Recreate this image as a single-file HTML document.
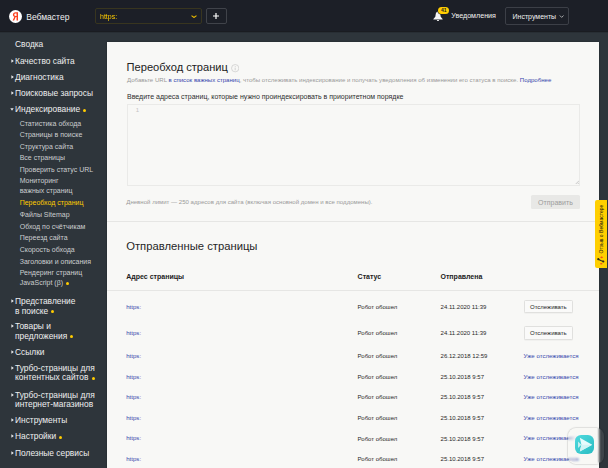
<!DOCTYPE html>
<html><head><meta charset="utf-8"><style>
*{margin:0;padding:0;box-sizing:border-box}
html,body{width:608px;height:468px;overflow:hidden;background:#2e353b;font-family:"Liberation Sans",sans-serif}
.t{position:absolute;white-space:nowrap}
.hdr{position:absolute;left:0;top:0;width:608px;height:32px;background:#1c1f27;border-bottom:1px solid #1a1c21;box-shadow:0 0.5px 0 rgba(26,28,33,.5)}
.logo{position:absolute;left:9.1px;top:9.8px;width:13px;height:13px}
.logo svg{display:block}
.sel{position:absolute;left:95.4px;top:8.4px;width:106.3px;height:15.3px;border:1px solid #38351f;border-radius:2px}
.chev{position:absolute}
.plus{position:absolute;left:206.2px;top:8.4px;width:20.4px;height:15.3px;border:1px solid #40434a;border-radius:2px}
.badge{position:absolute;left:438.2px;top:7px;width:11.3px;height:7.2px;border-radius:3.6px;background:#ffcc00;color:#222;font-size:5px;font-weight:700;line-height:7.2px;text-align:center;box-shadow:0 0 0 0.6px #1c1f27}
.tools{position:absolute;left:505.3px;top:7.4px;width:64.2px;height:17.2px;border:1px solid #3c3f47;border-radius:2px}
.ic{position:absolute}
.ar{position:absolute;width:0;height:0;border-top:1.5px solid transparent;border-bottom:1.5px solid transparent;border-left:2.3px solid #e9eaeb}
.ad{position:absolute;width:0;height:0;border-left:1.5px solid transparent;border-right:1.5px solid transparent;border-top:2.3px solid #e9eaeb}
.dot{display:inline-block;width:3px;height:3px;border-radius:50%;background:#ffcc00;margin-left:3.1px;vertical-align:0.5px}
.panel{position:absolute;left:106.8px;top:41.6px;width:492.1px;height:430px;background:#f8f8f6;box-shadow:0 0 1.5px rgba(0,0,0,.35)}
.lnk{color:#3646ac}
.ta{position:absolute;left:127px;top:104px;width:453px;height:82px;border:1px solid #eaeae8;background:#f8f8f6}
.btn-send{position:absolute;left:531.2px;top:195px;width:48.7px;height:13.8px;background:#e8e8e6;border-radius:1.5px}
.hr{position:absolute;left:106.8px;width:492.1px;height:0.6px;background:#e6e6e4}
.btn-tr{position:absolute;left:524px;width:48.7px;height:13.6px;border:0.6px solid #e0e0de;border-radius:1.5px;background:#fafaf9;box-shadow:0 0.4px 0.6px rgba(0,0,0,.06)}
.fb{position:absolute;left:595px;top:199.7px;width:12px;height:68.3px;background:#ffcf00;border-radius:2px 0 0 2px}
.fbt{position:absolute;left:6.2px;top:29.1px;font-size:5.05px;line-height:5px;color:#111;white-space:nowrap;transform:translate(-50%,-50%) rotate(-90deg)}
.flo{position:absolute;left:567.5px;top:428.3px;width:36.5px;height:35.4px;border-radius:8px;background:rgba(250,250,248,.08);backdrop-filter:blur(1.2px);-webkit-backdrop-filter:blur(1.2px);box-shadow:0 0 0 1px rgba(0,0,0,.045), 0 0 2px rgba(0,0,0,.2)}
.floi{position:absolute;left:575.3px;top:435px;width:19px;height:19px;border-radius:6px;background:linear-gradient(135deg,#50dade,#29bcc2);box-shadow:0 0 3px 3px rgba(247,247,245,.85)}
</style></head><body>
<div class="hdr"></div>
<div class="logo"><svg width="13" height="13" viewBox="0 0 26 26"><circle cx="13" cy="13" r="13" fill="#fff"/><path fill-rule="evenodd" d="M18 4.6H13.3C10 4.6 7.8 6.5 7.8 9.3C7.8 11.4 8.9 12.6 10.7 13.4L7.3 20.8H10.3L13.4 14H15.1V20.8H18ZM15.1 6.9H13.6C11.7 6.9 10.6 7.8 10.6 9.4C10.6 11 11.7 11.8 13.6 11.8H15.1Z" fill="#fc3f1d"/></svg></div><div class="t" style="left:26.3px;top:12.50px;font-size:8.5px;line-height:8.5px;color:#f0f0f0;font-weight:400;">Вебмастер</div>
<div class="sel"></div><div class="t" style="left:99.9px;top:12.87px;font-size:7px;line-height:7px;color:#ffcc00;font-weight:400;will-change:transform;">https:</div>
<svg class="chev" style="left:190.5px;top:14.5px" width="6" height="3.2" viewBox="0 0 6 3.2"><path d="M0.5 0.6L3 2.5L5.5 0.6" fill="none" stroke="#e8b800" stroke-width="1.1"/></svg><div class="plus"><svg width="8" height="8" viewBox="0 0 8 8" style="position:absolute;left:5.2px;top:2.9px"><path d="M4 1v6M1 4h6" stroke="#fff" stroke-width="1.2"/></svg></div><svg style="position:absolute;left:433.3px;top:11px" width="10" height="10" viewBox="0 0 10 10"><path d="M5 0.5C3.8 0.5 3 1.5 2.8 2.8L2.3 5.8L0.4 7.9V8.5H9.6V7.9L7.7 5.8L7.2 2.8C7 1.5 6.2 0.5 5 0.5Z M3.9 8.9H6.1C6.1 9.5 5.6 9.9 5 9.9C4.4 9.9 3.9 9.5 3.9 8.9Z" fill="#f4f4f4"/></svg><div class="badge">41</div><div class="t" style="left:451.3px;top:12.75px;font-size:7.15px;line-height:7.15px;color:#f0f0f0;font-weight:400;">Уведомления</div>
<div class="tools"></div><div class="t" style="left:512.5px;top:12.67px;font-size:7px;line-height:7px;color:#f0f0f0;font-weight:400;">Инструменты</div>
<svg class="chev" style="left:558.6px;top:15px" width="5.4" height="3.2" viewBox="0 0 6 4"><path d="M0.6 0.6L3 3L5.4 0.6" fill="none" stroke="#ddd" stroke-width="0.9"/></svg>
<div class="t" style="left:15px;top:40.49px;font-size:8.4px;line-height:8.4px;color:#eeeff0;font-weight:400;">Сводка</div>
<div class="t" style="left:15px;top:56.79px;font-size:8.4px;line-height:8.4px;color:#eeeff0;font-weight:400;">Качество сайта</div>
<svg class="ic" style="left:10.5px;top:58.60px" width="3" height="4" viewBox="0 0 3 4"><path d="M0.4 0.2L2.8 2L0.4 3.8z" fill="#e9eaeb"/></svg><div class="t" style="left:15px;top:72.99px;font-size:8.4px;line-height:8.4px;color:#eeeff0;font-weight:400;">Диагностика</div>
<svg class="ic" style="left:10.5px;top:74.80px" width="3" height="4" viewBox="0 0 3 4"><path d="M0.4 0.2L2.8 2L0.4 3.8z" fill="#e9eaeb"/></svg><div class="t" style="left:15px;top:89.09px;font-size:8.4px;line-height:8.4px;color:#eeeff0;font-weight:400;">Поисковые запросы</div>
<svg class="ic" style="left:10.5px;top:90.90px" width="3" height="4" viewBox="0 0 3 4"><path d="M0.4 0.2L2.8 2L0.4 3.8z" fill="#e9eaeb"/></svg><div class="t" style="left:15px;top:105.29px;font-size:8.4px;line-height:8.4px;color:#eeeff0;font-weight:400;">Индексирование<span class="dot"></span></div>
<svg class="ic" style="left:9.8px;top:108.40px" width="4" height="3" viewBox="0 0 4 3"><path d="M0.3 0.2L3.7 0.2L2 2.8z" fill="#e9eaeb"/></svg><div class="t" style="left:15px;top:297.19px;font-size:8.4px;line-height:8.4px;color:#eeeff0;font-weight:400;">Представление</div>
<div class="t" style="left:15px;top:306.79px;font-size:8.4px;line-height:8.4px;color:#eeeff0;font-weight:400;">в поиске<span class="dot"></span></div>
<svg class="ic" style="left:10.5px;top:299.00px" width="3" height="4" viewBox="0 0 3 4"><path d="M0.4 0.2L2.8 2L0.4 3.8z" fill="#e9eaeb"/></svg><div class="t" style="left:15px;top:322.19px;font-size:8.4px;line-height:8.4px;color:#eeeff0;font-weight:400;">Товары и</div>
<div class="t" style="left:15px;top:331.79px;font-size:8.4px;line-height:8.4px;color:#eeeff0;font-weight:400;">предложения<span class="dot"></span></div>
<svg class="ic" style="left:10.5px;top:324.00px" width="3" height="4" viewBox="0 0 3 4"><path d="M0.4 0.2L2.8 2L0.4 3.8z" fill="#e9eaeb"/></svg><div class="t" style="left:15px;top:348.29px;font-size:8.4px;line-height:8.4px;color:#eeeff0;font-weight:400;">Ссылки</div>
<svg class="ic" style="left:10.5px;top:350.10px" width="3" height="4" viewBox="0 0 3 4"><path d="M0.4 0.2L2.8 2L0.4 3.8z" fill="#e9eaeb"/></svg><div class="t" style="left:15px;top:363.89px;font-size:8.4px;line-height:8.4px;color:#eeeff0;font-weight:400;">Турбо-страницы для</div>
<div class="t" style="left:15px;top:373.49px;font-size:8.4px;line-height:8.4px;color:#eeeff0;font-weight:400;">контентных сайтов<span class="dot"></span></div>
<svg class="ic" style="left:10.5px;top:365.70px" width="3" height="4" viewBox="0 0 3 4"><path d="M0.4 0.2L2.8 2L0.4 3.8z" fill="#e9eaeb"/></svg><div class="t" style="left:15px;top:390.79px;font-size:8.4px;line-height:8.4px;color:#eeeff0;font-weight:400;">Турбо-страницы для</div>
<div class="t" style="left:15px;top:400.39px;font-size:8.4px;line-height:8.4px;color:#eeeff0;font-weight:400;">интернет-магазинов</div>
<svg class="ic" style="left:10.5px;top:392.60px" width="3" height="4" viewBox="0 0 3 4"><path d="M0.4 0.2L2.8 2L0.4 3.8z" fill="#e9eaeb"/></svg><div class="t" style="left:15px;top:415.79px;font-size:8.4px;line-height:8.4px;color:#eeeff0;font-weight:400;">Инструменты</div>
<svg class="ic" style="left:10.5px;top:417.60px" width="3" height="4" viewBox="0 0 3 4"><path d="M0.4 0.2L2.8 2L0.4 3.8z" fill="#e9eaeb"/></svg><div class="t" style="left:15px;top:432.39px;font-size:8.4px;line-height:8.4px;color:#eeeff0;font-weight:400;">Настройки<span class="dot"></span></div>
<svg class="ic" style="left:10.5px;top:434.20px" width="3" height="4" viewBox="0 0 3 4"><path d="M0.4 0.2L2.8 2L0.4 3.8z" fill="#e9eaeb"/></svg><div class="t" style="left:15px;top:448.69px;font-size:8.4px;line-height:8.4px;color:#eeeff0;font-weight:400;">Полезные сервисы</div>
<svg class="ic" style="left:10.5px;top:450.50px" width="3" height="4" viewBox="0 0 3 4"><path d="M0.4 0.2L2.8 2L0.4 3.8z" fill="#e9eaeb"/></svg><div class="t" style="left:19.7px;top:119.57px;font-size:7px;line-height:7px;color:#cbcdcf;font-weight:400;">Статистика обхода</div>
<div class="t" style="left:19.7px;top:131.07px;font-size:7px;line-height:7px;color:#cbcdcf;font-weight:400;">Страницы в поиске</div>
<div class="t" style="left:19.7px;top:142.77px;font-size:7px;line-height:7px;color:#cbcdcf;font-weight:400;">Структура сайта</div>
<div class="t" style="left:19.7px;top:154.27px;font-size:7px;line-height:7px;color:#cbcdcf;font-weight:400;">Все страницы</div>
<div class="t" style="left:19.7px;top:165.87px;font-size:7px;line-height:7px;color:#cbcdcf;font-weight:400;">Проверить статус URL</div>
<div class="t" style="left:19.7px;top:177.27px;font-size:7px;line-height:7px;color:#cbcdcf;font-weight:400;">Мониторинг</div>
<div class="t" style="left:19.7px;top:187.07px;font-size:7px;line-height:7px;color:#cbcdcf;font-weight:400;">важных страниц</div>
<div class="t" style="left:19.7px;top:199.07px;font-size:7px;line-height:7px;color:#ffcc00;font-weight:400;">Переобход страниц</div>
<div class="t" style="left:19.7px;top:210.87px;font-size:7px;line-height:7px;color:#cbcdcf;font-weight:400;">Файлы Sitemap</div>
<div class="t" style="left:19.7px;top:222.57px;font-size:7px;line-height:7px;color:#cbcdcf;font-weight:400;">Обход по счётчикам</div>
<div class="t" style="left:19.7px;top:234.27px;font-size:7px;line-height:7px;color:#cbcdcf;font-weight:400;">Переезд сайта</div>
<div class="t" style="left:19.7px;top:245.97px;font-size:7px;line-height:7px;color:#cbcdcf;font-weight:400;">Скорость обхода</div>
<div class="t" style="left:19.7px;top:257.67px;font-size:7px;line-height:7px;color:#cbcdcf;font-weight:400;">Заголовки и описания</div>
<div class="t" style="left:19.7px;top:269.37px;font-size:7px;line-height:7px;color:#cbcdcf;font-weight:400;">Рендеринг страниц</div>
<div class="t" style="left:19.7px;top:279.07px;font-size:7px;line-height:7px;color:#cbcdcf;font-weight:400;">JavaScript (β)<span class="dot" style="margin-left:3px"></span></div>

<div class="panel"></div>
<div class="t" style="left:126.6px;top:62.29px;font-size:11.12px;line-height:11.12px;color:#222;font-weight:400;">Переобход страниц</div>
<svg style="position:absolute;left:230.6px;top:64.2px" width="8.4" height="8.4" viewBox="0 0 16 16"><circle cx="8" cy="8" r="7" fill="none" stroke="#c4c4c4" stroke-width="1.2"/><path d="M8 7v5" stroke="#c4c4c4" stroke-width="1.4"/><circle cx="8" cy="4.6" r="0.9" fill="#c4c4c4"/></svg><div class="t" style="left:127px;top:76.86px;font-size:6.07px;line-height:6.07px;color:#999;font-weight:400;">Добавьте URL <span class="lnk">в список важных страниц</span>, чтобы отслеживать индексирование и получать уведомления об изменении его статуса в поиске. <span class="lnk">Подробнее</span></div>
<div class="t" style="left:127px;top:92.87px;font-size:7px;line-height:7px;color:#2e2e2e;font-weight:400;">Введите адреса страниц, которые нужно проиндексировать в приоритетном порядке</div>
<div class="ta"></div><div class="t" style="left:135.7px;top:106.72px;font-size:6px;line-height:6px;color:#c4c4c4;font-weight:400;">1</div>
<svg style="position:absolute;left:574.5px;top:179.5px" width="4.5" height="4.5" viewBox="0 0 9 9"><path d="M8.5 1L1 8.5M8.5 5L5 8.5" stroke="#999" stroke-width="1"/></svg><div class="t" style="left:126.3px;top:199.46px;font-size:6.07px;line-height:6.07px;color:#9a9a9a;font-weight:400;">Дневной лимит — 250 адресов для сайта (включая основной домен и все поддомены).</div>
<div class="btn-send"></div><div class="t" style="left:538.1px;top:198.57px;font-size:7px;line-height:7px;color:#9c9c9c;font-weight:400;">Отправить</div>
<div class="hr" style="top:221px"></div><div class="t" style="left:126.2px;top:241.48px;font-size:11.25px;line-height:11.25px;color:#262626;font-weight:400;">Отправленные страницы</div>
<div class="t" style="left:126.3px;top:273.07px;font-size:7px;line-height:7px;color:#222;font-weight:700;">Адрес страницы</div>
<div class="t" style="left:357.6px;top:273.07px;font-size:7px;line-height:7px;color:#222;font-weight:700;">Статус</div>
<div class="t" style="left:440.5px;top:273.07px;font-size:7px;line-height:7px;color:#222;font-weight:700;">Отправлена</div>
<div class="hr" style="top:290px"></div><div class="t" style="left:126.2px;top:303.64px;font-size:6.1px;line-height:6.1px;color:#3646ac;font-weight:400;">https:</div>
<div class="t" style="left:357.6px;top:303.72px;font-size:6px;line-height:6px;color:#282828;font-weight:400;">Робот обошел</div>
<div class="t" style="left:440.6px;top:303.72px;font-size:6px;line-height:6px;color:#282828;font-weight:400;">24.11.2020 11:39</div>
<div class="btn-tr" style="top:299.9px"></div><div class="t" style="left:530px;top:303.72px;font-size:6px;line-height:6px;color:#262626;font-weight:400;">Отслеживать</div>
<div class="t" style="left:126.2px;top:329.84px;font-size:6.1px;line-height:6.1px;color:#3646ac;font-weight:400;">https:</div>
<div class="t" style="left:357.6px;top:329.92px;font-size:6px;line-height:6px;color:#282828;font-weight:400;">Робот обошел</div>
<div class="t" style="left:440.6px;top:329.92px;font-size:6px;line-height:6px;color:#282828;font-weight:400;">24.11.2020 11:39</div>
<div class="btn-tr" style="top:326.0px"></div><div class="t" style="left:530px;top:329.92px;font-size:6px;line-height:6px;color:#262626;font-weight:400;">Отслеживать</div>
<div class="t" style="left:126.2px;top:353.24px;font-size:6.1px;line-height:6.1px;color:#3646ac;font-weight:400;">https:</div>
<div class="t" style="left:357.6px;top:353.32px;font-size:6px;line-height:6px;color:#282828;font-weight:400;">Робот обошел</div>
<div class="t" style="left:440.6px;top:353.32px;font-size:6px;line-height:6px;color:#282828;font-weight:400;">26.12.2018 12:59</div>
<div class="t" style="left:523.6px;top:353.24px;font-size:6.1px;line-height:6.1px;color:#3646ac;font-weight:400;">Уже отслеживается</div>
<div class="t" style="left:126.2px;top:373.64px;font-size:6.1px;line-height:6.1px;color:#3646ac;font-weight:400;">https:</div>
<div class="t" style="left:357.6px;top:373.72px;font-size:6px;line-height:6px;color:#282828;font-weight:400;">Робот обошел</div>
<div class="t" style="left:440.6px;top:373.72px;font-size:6px;line-height:6px;color:#282828;font-weight:400;">25.10.2018 9:57</div>
<div class="t" style="left:523.6px;top:373.64px;font-size:6.1px;line-height:6.1px;color:#3646ac;font-weight:400;">Уже отслеживается</div>
<div class="t" style="left:126.2px;top:394.04px;font-size:6.1px;line-height:6.1px;color:#3646ac;font-weight:400;">https:</div>
<div class="t" style="left:357.6px;top:394.12px;font-size:6px;line-height:6px;color:#282828;font-weight:400;">Робот обошел</div>
<div class="t" style="left:440.6px;top:394.12px;font-size:6px;line-height:6px;color:#282828;font-weight:400;">25.10.2018 9:57</div>
<div class="t" style="left:523.6px;top:394.04px;font-size:6.1px;line-height:6.1px;color:#3646ac;font-weight:400;">Уже отслеживается</div>
<div class="t" style="left:126.2px;top:414.74px;font-size:6.1px;line-height:6.1px;color:#3646ac;font-weight:400;">https:</div>
<div class="t" style="left:357.6px;top:414.82px;font-size:6px;line-height:6px;color:#282828;font-weight:400;">Робот обошел</div>
<div class="t" style="left:440.6px;top:414.82px;font-size:6px;line-height:6px;color:#282828;font-weight:400;">25.10.2018 9:57</div>
<div class="t" style="left:523.6px;top:414.74px;font-size:6.1px;line-height:6.1px;color:#3646ac;font-weight:400;">Уже отслеживается</div>
<div class="t" style="left:126.2px;top:435.44px;font-size:6.1px;line-height:6.1px;color:#3646ac;font-weight:400;">https:</div>
<div class="t" style="left:357.6px;top:435.52px;font-size:6px;line-height:6px;color:#282828;font-weight:400;">Робот обошел</div>
<div class="t" style="left:440.6px;top:435.52px;font-size:6px;line-height:6px;color:#282828;font-weight:400;">25.10.2018 9:57</div>
<div class="t" style="left:523.6px;top:435.44px;font-size:6.1px;line-height:6.1px;color:#3646ac;font-weight:400;">Уже отслеживается</div>
<div class="t" style="left:126.2px;top:456.24px;font-size:6.1px;line-height:6.1px;color:#3646ac;font-weight:400;">https:</div>
<div class="t" style="left:357.6px;top:456.32px;font-size:6px;line-height:6px;color:#282828;font-weight:400;">Робот обошел</div>
<div class="t" style="left:440.6px;top:456.32px;font-size:6px;line-height:6px;color:#282828;font-weight:400;">25.10.2018 9:57</div>
<div class="t" style="left:523.6px;top:456.24px;font-size:6.1px;line-height:6.1px;color:#3646ac;font-weight:400;">Уже отслеживается</div>

<div class="fb"><div class="fbt">Отзыв о Вебмастере</div><svg style="position:absolute;left:2px;top:56px" width="8" height="9" viewBox="0 0 8 9"><path d="M1.2 3.3L3.8 4.4L6.4 5.4" fill="none" stroke="#2a2a1a" stroke-width="1.1"/><circle cx="1.3" cy="3.2" r="1.1" fill="#2a2a1a"/><circle cx="6.3" cy="5.5" r="1.1" fill="#2a2a1a"/><ellipse cx="4.6" cy="1.4" rx="1.2" ry="0.8" fill="#ef4a1c"/><ellipse cx="4.3" cy="7.7" rx="1.2" ry="0.8" fill="#ef4a1c"/></svg></div>
<div class="flo"></div><div class="floi"><svg width="19" height="19" viewBox="0 0 19 19" style="position:absolute;left:0;top:0"><path d="M4.8 2.8L17.2 9.8L4.8 16.6L6.4 9.8z" fill="#e8fbfc"/><path d="M6.4 9.8L17.2 9.8L4.8 16.6z" fill="#d2f4f5"/><path d="M3 6.6L6.4 9.8L3 13z" fill="#c4eff1"/></svg></div>
</body></html>
